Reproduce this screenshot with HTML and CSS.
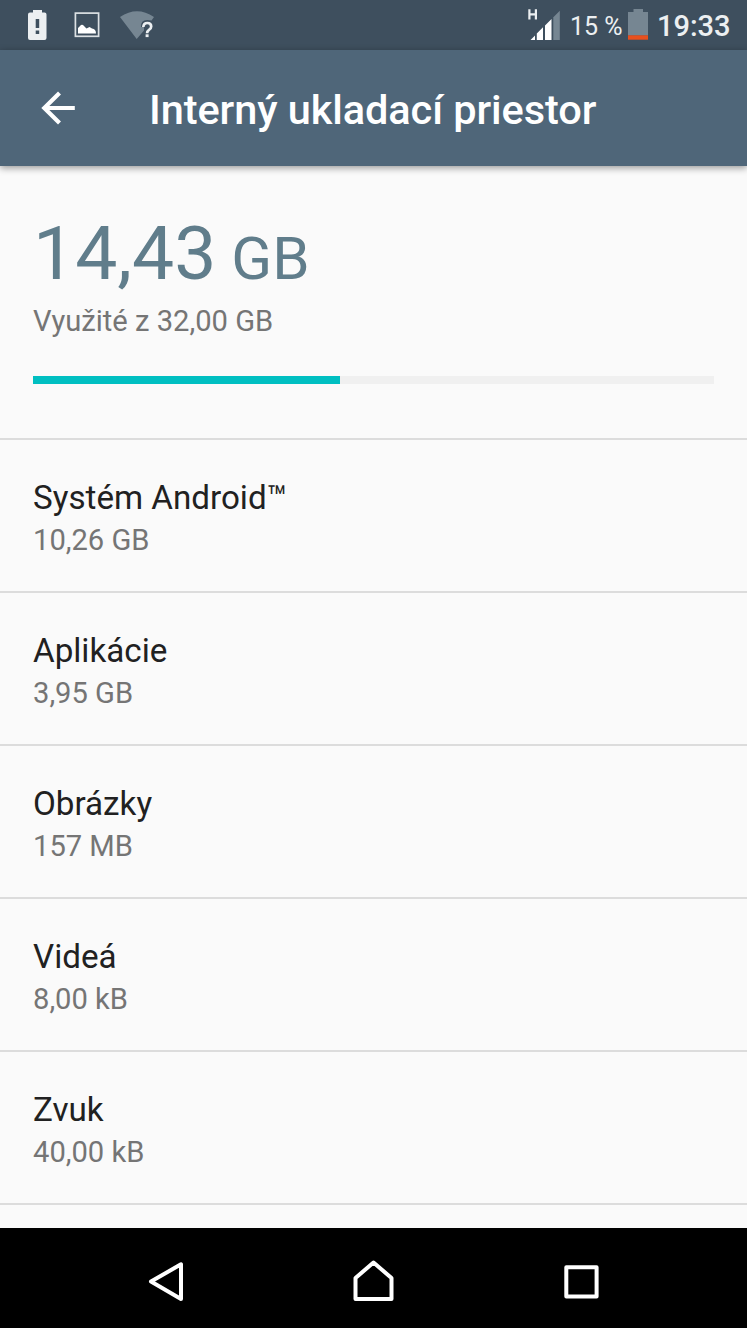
FILE: index.html
```html
<!DOCTYPE html>
<html lang="sk">
<head>
<meta charset="utf-8">
<title>Interný ukladací priestor</title>
<link rel="stylesheet" href="styles.css">
</head>
<body>
<div class="screen">
  <div class="status">
    <svg class="status-left" width="170" height="50" viewBox="0 0 170 50">
      <path fill="#eceff1" fill-rule="evenodd" d="M33 10h9v2.500h2.500q2 0 2 2v23.500q0 2-2 2h-14.500q-2 0-2-2v-23.500q0-2 2-2h3zM35.700 19v9h3.500v-9zM35.700 30.500v3.500h3.500v-3.500z"/>
      <rect x="75.400" y="13.100" width="23.200" height="23.200" fill="none" stroke="#dce1e4" stroke-width="1.700"/>
      <path fill="#fff" d="M78 33.500v-5.500l3-3q1.500-1 3 1l2.500 2.500 3-1.500 2.500 1.500q4 .5 4 5z"/>
      <path fill="#768692" d="M120 17q17-11.500 34 0l-2.500 3.500q-11-2.500-10.500 6.500h3v3.500l-7.300 8.500z"/>
      <path fill="none" stroke="#eceff1" stroke-width="2.700" d="M143.300 27q.3-4 4-4 3.900 0 3.900 3.500 0 2-2.200 3.300-1.900 1.300-1.900 3.500"/>
      <rect x="145.600" y="34.300" width="3" height="2.800" fill="#eceff1"/>
    </svg>
    <div class="status-right">
      <svg width="34" height="50" viewBox="527 0 34 50">
        <path fill="none" stroke="#eceff1" stroke-width="2.200" d="M529.400 9.200v10.300M535.900 9.200v10.300M529.400 14.300h6.500"/>
        <path fill="#fff" d="M530.500 40l4.500-4.500v4.500zM536.800 40v-6.500l6.200-6.200v12.700zM545 40v-14.500l6.500-6.500v21z"/>
        <path fill="#768692" d="M553.300 40v-22.800l6.500-6.500v29.300z"/>
      </svg>
      <span class="percent">15 %</span>
      <svg class="battery" width="20" height="50" viewBox="628 0 20 50">
        <path fill="#768692" d="M628 12h5.500v-3h9.500v3h5v23.500h-20z"/>
        <rect x="628" y="35.300" width="20" height="4.400" fill="#e8501e"/>
      </svg>
      <span class="clock">19:33</span>
    </div>
  </div>

  <header class="appbar">
    <svg class="back" width="36" height="36" viewBox="0 0 36 36">
      <path fill="none" stroke="#fff" stroke-width="4.200" d="M34.800 18h-30.500M19.500 3l-15.200 15 15.200 15"/>
    </svg>
    <h1 class="title">Interný ukladací priestor</h1>
  </header>

  <main class="content">
    <section class="summary">
      <div class="amount">14,43<span class="unit"> GB</span></div>
      <div class="caption">Využité z 32,00 GB</div>
      <div class="bar"><div class="fill" style="width: 45.050%"></div></div>
    </section>
    <div class="row"><div class="name">Systém Android™</div><div class="size">10,26 GB</div></div>
    <div class="row"><div class="name">Aplikácie</div><div class="size">3,95 GB</div></div>
    <div class="row"><div class="name">Obrázky</div><div class="size">157 MB</div></div>
    <div class="row"><div class="name">Videá</div><div class="size">8,00 kB</div></div>
    <div class="row"><div class="name">Zvuk</div><div class="size">40,00 kB</div></div>
  </main>

  <nav class="navbar">
    <svg width="36" height="42" viewBox="148 1260 36 42"><path d="M151 1281.500l30-17.200v34.700z"/></svg>
    <svg width="42" height="42" viewBox="353 1260 42 42"><path d="M355.500 1278l18-15.500 18 15.500v21h-36z"/></svg>
    <svg width="36" height="42" viewBox="564 1260 36 42"><path d="M566.300 1267.200h30.300v29.200h-30.300z"/></svg>
  </nav>
</div>
</body>
</html>
```
FILE: styles.css
```css
body {
  margin: 0;
  background: #fafafa;
  font-family: Roboto, "Noto Sans", sans-serif;
}

.screen {
  display: flex;
  flex-direction: column;
  width: 747px;
  height: 1328px;
  overflow: hidden;
}

.status {
  display: flex;
  justify-content: space-between;
  flex: none;
  height: 50px;
  background: #3e4f5e;
  color: #eceff1;
}

.status-right {
  display: flex;
  padding-right: 17px;
  white-space: nowrap;
}

.percent {
  width: 58px;
  margin-left: 9px;
  font-size: 25px;
  line-height: 53px;
}

.clock {
  width: 73px;
  margin-left: 9px;
  font-size: 29px;
  font-weight: 500;
  line-height: 52px;
}

.appbar {
  display: flex;
  align-items: center;
  flex: none;
  height: 116px;
  box-sizing: border-box;
  padding-left: 40px;
  background: #4f6679;
  box-shadow: 0 2px 7px rgba(0, 0, 0, 0.4);
  z-index: 1;
}

.title {
  margin: 3px 0 0 73px;
  color: #fff;
  font-size: 41.5px;
  font-weight: 500;
  line-height: 50px;
  letter-spacing: -0.08px;
  white-space: nowrap;
}

.content {
  flex: 1;
  overflow: hidden;
}

.summary {
  height: 274px;
  box-sizing: border-box;
  padding: 42px 33px 0;
  border-bottom: 2px solid #dcdcdc;
}

.amount {
  height: 90px;
  color: #607d8b;
  font-size: 75px;
  line-height: 90px;
  white-space: nowrap;
}

.unit {
  font-size: 60px;
  line-height: 1;
}

.caption {
  margin-top: 5px;
  color: #757575;
  font-size: 29.15px;
  line-height: 36px;
}

.bar {
  height: 8px;
  margin-top: 37px;
  background: #f0f0f0;
}

.fill {
  height: 100%;
  background: #00bfc1;
}

.row {
  height: 153px;
  box-sizing: border-box;
  padding: 38px 33px 0;
  border-bottom: 2px solid #dcdcdc;
}

.name {
  color: #212121;
  font-size: 33.2px;
  line-height: 40px;
}

.size {
  margin-top: 4px;
  color: #757575;
  font-size: 29.15px;
  line-height: 36px;
}

.navbar {
  display: flex;
  justify-content: space-between;
  align-items: center;
  flex: none;
  height: 100px;
  box-sizing: border-box;
  padding: 6px 147px 0 148px;
  background: #000;
}

.navbar path {
  fill: none;
  stroke: #fff;
  stroke-width: 4;
  stroke-linejoin: round;
}
```
